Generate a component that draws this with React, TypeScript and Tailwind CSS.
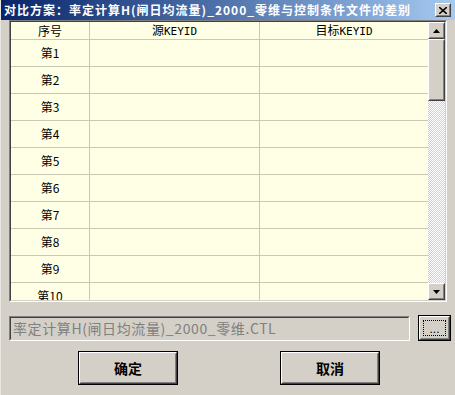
import React from "react";

const rows = ["第1", "第2", "第3", "第4", "第5", "第6", "第7", "第8", "第9", "第10"];

const cjk = { fontFamily: '"Noto Sans CJK SC", "Liberation Sans", sans-serif' };
const mono = { fontFamily: '"DejaVu Sans Mono", monospace' };

function Raised({ children, className = "" }: { children?: React.ReactNode; className?: string }) {
  return (
    <div className={"border border-t-white border-l-white border-r-[#404040] border-b-[#404040] bg-[#d4d0c8] " + className}>
      <div className="w-full h-full border border-t-[#d4d0c8] border-l-[#d4d0c8] border-r-[#808080] border-b-[#808080] flex items-center justify-center">
        {children}
      </div>
    </div>
  );
}

export default function App() {
  return (
    <div className="w-[455px] h-[395px] bg-[#d4d0c8] flex flex-col overflow-hidden border-l border-l-[#e8e6e0]" style={cjk}>
      {/* title bar */}
      <div className="h-[20px] shrink-0 bg-gradient-to-r from-[#0a246a] to-[#a6caf0] flex items-center justify-between pl-[3px] pr-[4px]">
        <span className="text-white font-bold text-[12px] leading-none whitespace-nowrap tracking-[1px]">
          对比方案：率定计算H(闸日均流量)_2000_零维与控制条件文件的差别
        </span>
        <Raised className="w-[16px] h-[14px]">
          <svg width="8" height="7" viewBox="0 0 8 7">
            <path d="M0 0 L8 7 M8 0 L0 7" stroke="#000" strokeWidth="1.6" />
          </svg>
        </Raised>
      </div>

      {/* grid */}
      <div className="ml-[8px] w-[438px] h-[282px] border border-t-[#808080] border-l-[#808080] border-r-white border-b-white">
        <div className="w-full h-full border border-t-[#404040] border-l-[#404040] border-r-[#d4d0c8] border-b-[#d4d0c8] flex bg-[#ffffe6]">
          <div className="flex-1 overflow-hidden">
            <div className="flex h-[18px] border-b border-[#c8c8b4] text-[12px] text-black">
              <div className="w-[79px] border-r border-[#c8c8b4] flex items-center justify-center">序号</div>
              <div className="w-[170px] border-r border-[#c8c8b4] flex items-center justify-center">
                <span>源<span style={mono} className="text-[11px]">KEYID</span></span>
              </div>
              <div className="flex-1 flex items-center justify-center">
                <span>目标<span style={mono} className="text-[11px]">KEYID</span></span>
              </div>
            </div>
            {rows.map((r) => (
              <div key={r} className="flex h-[27px] shrink-0 border-b border-[#c8c8b4] text-[12px] text-black">
                <div className="w-[79px] border-r border-[#c8c8b4] flex items-center justify-center">{r}</div>
                <div className="w-[170px] border-r border-[#c8c8b4]" />
                <div className="flex-1" />
              </div>
            ))}
          </div>
          {/* scrollbar */}
          <div className="w-[17px] h-full flex flex-col bg-[repeating-conic-gradient(#d4d0c8_0_25%,#ffffff_0_50%)] bg-[length:2px_2px]">
            <Raised className="w-[17px] h-[17px] shrink-0">
              <svg width="7" height="4" viewBox="0 0 7 4"><path d="M3.5 0 L7 4 L0 4Z" fill="#000" /></svg>
            </Raised>
            <Raised className="w-[17px] h-[62px] shrink-0" />
            <div className="flex-1" />
            <Raised className="w-[17px] h-[17px] shrink-0">
              <svg width="7" height="4" viewBox="0 0 7 4"><path d="M0 0 L7 0 L3.5 4Z" fill="#000" /></svg>
            </Raised>
          </div>
        </div>
      </div>

      {/* file row */}
      <div className="flex items-center mt-[13px] ml-[8px]">
        <div className="w-[401px] h-[25px] border border-t-[#808080] border-l-[#808080] border-r-white border-b-white">
          <div className="w-full h-full border border-t-[#404040] border-l-[#404040] border-r-[#d4d0c8] border-b-[#d4d0c8] flex items-center pl-[2px] text-[14px] tracking-[0.6px] text-[#808080] whitespace-nowrap overflow-hidden">
            率定计算H(闸日均流量)_2000_零维.CTL
          </div>
        </div>
        <div className="ml-[8px] w-[33px] h-[26px] border border-black">
          <Raised className="w-full h-full">
            <div className="w-[23px] h-[16px] border border-dotted border-black flex items-end justify-center text-[12px] leading-[12px] text-black" style={{ fontFamily: '"Liberation Sans", sans-serif' }}>
              ...
            </div>
          </Raised>
        </div>
      </div>

      {/* buttons */}
      <div className="flex mt-[10px] ml-[77px]">
        <div className="w-[100px] h-[34px] border border-black">
          <Raised className="w-full h-full">
            <span className="text-[14px] font-bold text-black">确定</span>
          </Raised>
        </div>
        <div className="w-[100px] h-[34px] border border-black ml-[102px]">
          <Raised className="w-full h-full">
            <span className="text-[14px] font-bold text-black">取消</span>
          </Raised>
        </div>
      </div>
    </div>
  );
}
